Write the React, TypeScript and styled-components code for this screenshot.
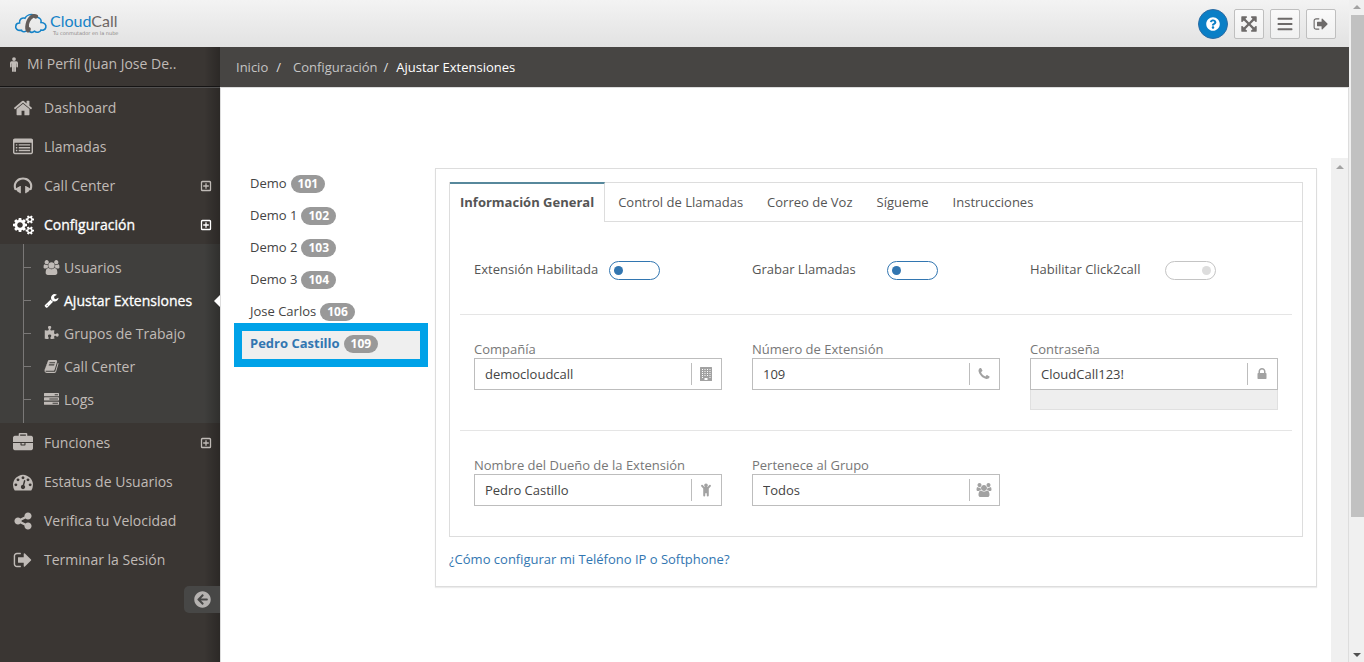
import React from 'react';
import styled, { createGlobalStyle, css } from 'styled-components';
import { FaArrowCircleLeft, FaQuestionCircle } from 'react-icons/fa';

const GlobalStyle = createGlobalStyle`
  * { box-sizing: border-box; }
  body {
    margin: 0;
    background: #fff;
    color: #555;
    font: 13px/20px 'Open Sans', 'Noto Sans', sans-serif;
  }
  a { color: inherit; text-decoration: none; }
  button, input { font: inherit; }
  ul, ol { list-style: none; margin: 0; padding: 0; }
`;

/* ---------- Icons ---------- */

const paths = {
  home: 'M1472 992v480q0 26-19 45t-45 19h-384v-384h-256v384h-384q-26 0-45-19t-19-45v-480q0-1 .5-3t.5-3l575-474 575 474q1 2 1 6zm223-69l-62 74q-8 9-21 11h-3q-13 0-21-7l-692-577-692 577q-12 8-24 7-13-2-21-11l-62-74q-8-10-7-23.5t11-21.5l719-599q32-26 76-26t76 26l244 204v-195q0-14 9-23t23-9h192q14 0 23 9t9 23v408l219 182q10 8 11 21.5t-7 23.5z',
  list: 'M256 1152h128v128h-128zM256 896h128v128h-128zM256 640h128v128h-128zM512 1152h1024v128h-1024zM512 896h1024v128h-1024zM512 640h1024v128h-1024zM1664 1376v-832q0-13-9.500-22.500t-22.500-9.500h-1472q-13 0-22.500 9.500t-9.500 22.500v832q0 13 9.500 22.500t22.500 9.500h1472q13 0 22.500-9.500t9.500-22.500zM1792 288v1088q0 66-47 113t-113 47h-1472q-66 0-113-47t-47-113v-1088q0-66 47-113t113-47h1472q66 0 113 47t47 113z',
  headphones: 'M1728 886q0 166-60 314l-20 49-185 33q-22 83-90.5 136.500t-156.500 53.500v32q0 14-9 23t-23 9h-64q-14 0-23-9t-9-23v-576q0-14 9-23t23-9h64q14 0 23 9t9 23v32q71 0 130 35.500t93 95.500l68-12q29-95 29-193 0-148-88-279t-236.500-209-315.500-78-315.500 78-236.500 209-88 279q0 98 29 193l68 12q34-60 93-95.500t130-35.500v-32q0-14 9-23t23-9h64q14 0 23 9t9 23v576q0 14-9 23t-23 9h-64q-14 0-23-9t-9-23v-32q-88 0-156.500-53.500t-90.500-136.500l-185-33-20-49q-60-148-60-314 0-151 67-291t179-242.500 266-163.500 320-61 320 61 266 163.500 179 242.500 67 291z',
  cogs: 'M896 896q0-106-75-181t-181-75-181 75-75 181 75 181 181 75 181-75 75-181zm768 512q0-52-38-90t-90-38-90 38-38 90q0 53 37.500 90.500t90.500 37.500 90.500-37.500 37.500-90.500zm0-1024q0-52-38-90t-90-38-90 38-38 90q0 53 37.500 90.500t90.500 37.500 90.500-37.500 37.500-90.500zm-384 421v185q0 10-7 19.500t-16 10.500l-155 24q-11 35-32 76 34 48 90 115 7 11 7 20 0 12-7 19-23 30-82.500 89.500t-78.500 59.500q-11 0-21-7l-115-90q-37 19-77 31-11 108-23 155-7 24-30 24h-186q-11 0-20-7.500t-10-17.500l-23-153q-34-10-75-31l-118 89q-7 7-20 7-11 0-21-8-144-133-144-160 0-9 7-19 10-14 41-53t47-61q-23-44-35-82l-152-24q-10-1-17-9.500t-7-19.500v-185q0-10 7-19.500t16-10.500l155-24q11-35 32-76-34-48-90-115-7-11-7-20 0-12 7-20 22-30 82-89t79-59q11 0 21 7l115 90q34-18 77-32 11-108 23-154 7-24 30-24h186q11 0 20 7.500t10 17.500l23 153q34 10 75 31l118-89q8-7 20-7 11 0 21 8 144 133 144 160 0 8-7 19-12 16-42 54t-45 60q23 48 34 82l152 23q10 2 17 10.500t7 19.500zm640 533v140q0 16-149 31-12 27-30 52 51 113 51 138 0 4-4 7-122 71-124 71-8 0-46-47t-52-68q-20 2-30 2t-30-2q-14 21-52 68t-46 47q-2 0-124-71-4-3-4-7 0-25 51-138-18-25-30-52-149-15-149-31v-140q0-16 149-31 13-29 30-52-51-113-51-138 0-4 4-7 4-2 35-20t59-34 30-16q8 0 46 46.500t52 67.500q20-2 30-2t30 2q51-71 92-112l6-2q4 0 124 70 4 3 4 7 0 25-51 138 17 23 30 52 149 15 149 31zm0-1024v140q0 16-149 31-12 27-30 52 51 113 51 138 0 4-4 7-122 71-124 71-8 0-46-47t-52-68q-20 2-30 2t-30-2q-14 21-52 68t-46 47q-2 0-124-71-4-3-4-7 0-25 51-138-18-25-30-52-149-15-149-31v-140q0-16 149-31 13-29 30-52-51-113-51-138 0-4 4-7 4-2 35-20t59-34 30-16q8 0 46 46.500t52 67.500q20-2 30-2t30 2q51-71 92-112l6-2q4 0 124 70 4 3 4 7 0 25-51 138 17 23 30 52 149 15 149 31z',
  group: 'M657 896q-162 5-265 128h-134q-82 0-138-40.500t-56-118.500q0-353 124-353 6 0 43.500 21t97.500 42.500 119 21.500q67 0 133-23-5 37-5 66 0 139 81 256zm1071 637q0 120-73 189.500t-194 69.500h-874q-121 0-194-69.500t-73-189.500q0-53 3.500-103.500t14-109 26.500-108.500 43-97.500 62-81 85.500-53.500 111.500-20q10 0 43 21.500t73 48 107 48 135 21.500 135-21.500 107-48 73-48 43-21.500q61 0 111.500 20t85.500 53.500 62 81 43 97.500 26.500 108.500 14 109 3.500 103.500zm-1024-1277q0 106-75 181t-181 75-181-75-75-181 75-181 181-75 181 75 75 181zm704 384q0 159-112.500 271.500t-271.500 112.500-271.500-112.500-112.500-271.500 112.500-271.500 271.500-112.500 271.500 112.500 112.500 271.500zm576 225q0 78-56 118.500t-138 40.500h-134q-103-123-265-128 81-117 81-256 0-29-5-66 66 23 133 23 59 0 119-21.500t97.500-42.500 43.500-21q124 0 124 353zm-128-609q0 106-75 181t-181 75-181-75-75-181 75-181 181-75 181 75 75 181z',
  wrench: 'M448 1472q0-26-19-45t-45-19-45 19-19 45 19 45 45 19 45-19 19-45zm644-420l-682 682q-37 37-90 37-52 0-91-37l-106-108q-38-36-38-90 0-53 38-91l681-681q39 98 114.500 173.500t173.500 114.500zm634-435q0 39-23 106-47 134-164.500 217.500t-258.500 83.500q-185 0-316.500-131.500t-131.500-316.500 131.500-316.500 316.500-131.500q58 0 121.500 16.500t107.500 46.500q16 11 16 28t-16 28l-293 169v224l193 107q5-3 79-48.500t135.500-81 70.500-35.500q15 0 23.500 10t8.500 25z',
  puzzle: 'M1755 1083q0 81-44.500 135t-123.500 54q-41 0-77.500-17.500t-59-38-56.500-38-71-17.500q-110 0-110 124 0 39 16 115t15 115v5q-22 0-33 1-34 3-97.500 11.500t-115.500 13.500-98 5q-61 0-103-26.500t-42-83.500q0-37 17.500-71t38-56.500 38-59 17.500-77.500q0-79-54-123.500t-135-44.500q-84 0-143 45.500t-59 127.500q0 43 15 83t33.500 64.500 33.500 53 15 50.500q0 45-46 89-37 35-117 35-95 0-245-24-9-2-27.500-4t-27.500-4l-13-2q-1 0-3-1-2 0-2-1v-1024q2 1 17.500 3.500t34 5 21.500 3.500q150 24 245 24 80 0 117-35 46-44 46-89 0-22-15-50.500t-33.500-53-33.500-64.500-15-83q0-82 59-127.500t144-45.500q80 0 134 44.500t54 123.500q0 41-17.500 77.500t-38 59-38 56.500-17.500 71q0 57 42 83.500t103 26.500q64 0 180-15t163-17v2q-1 2-3.500 17.500t-5 34-3.500 21.500q-24 150-24 245 0 80 35 117 44 46 89 46 22 0 50.500-15t53-33.500 64.500-33.500 83-15q82 0 127.500 59t45.500 143z',
  book: 'M1703 478q40 57 18 129l-275 906q-19 64-76.500 107.500t-122.500 43.500h-923q-77 0-148.500-53.500t-99.500-131.500q-24-67-2-127 0-4 3-27t4-37q1-8-3-21.500t-3-19.500q2-11 8-21t16.500-23.500 16.500-23.500q23-38 45-91.500t30-91.500q3-10 .5-30t-.5-28q3-11 17-28t17-23q21-36 42-92t25-90q1-9-2.500-32t.5-28q4-13 22-30.500t22-22.500q19-26 42.500-84.500t27.500-96.500q1-8-3-25.500t-2-26.500q2-8 9-18t18-23 17-21q8-12 16.500-30.500t15-35 16-36 19.500-32 26.500-23.500 36-11.500 47.500 5.500l-1 3q38-9 51-9h761q74 0 114 56t18 130l-274 906q-36 119-71.500 153.500t-128.500 34.500h-869q-27 0-38 15-11 16-1 43 24 70 144 70h923q29 0 56-15.500t35-41.500l300-987q7-22 5-57 38 15 59 43zm-1064 2q-4 13 2 22.500t20 9.500h608q13 0 25.500-9.500t16.500-22.500l21-64q4-13-2-22.500t-20-9.500h-608q-13 0-25.500 9.500t-16.500 22.500zm-83 256q-4 13 2 22.500t20 9.500h608q13 0 25.500-9.500t16.500-22.500l21-64q4-13-2-22.500t-20-9.500h-608q-13 0-25.500 9.500t-16.500 22.500z',
  tasks: 'M1024 1408h640v-128h-640v128zm-384-512h1024v-128h-1024v128zm640-512h384v-128h-384v128zm512 832v256q0 26-19 45t-45 19h-1664q-26 0-45-19t-19-45v-256q0-26 19-45t45-19h1664q26 0 45 19t19 45zm0-512v256q0 26-19 45t-45 19h-1664q-26 0-45-19t-19-45v-256q0-26 19-45t45-19h1664q26 0 45 19t19 45zm0-512v256q0 26-19 45t-45 19h-1664q-26 0-45-19t-19-45v-256q0-26 19-45t45-19h1664q26 0 45 19t19 45z',
  briefcase: 'M640 256h512v-128h-512v128zm1152 640v480q0 66-47 113t-113 47h-1472q-66 0-113-47t-47-113v-480h672v160q0 26 19 45t45 19h320q26 0 45-19t19-45v-160h672zm-768 0v128h-256v-128h256zm768-480v384h-1792v-384q0-66 47-113t113-47h352v-160q0-40 28-68t68-28h576q40 0 68 28t28 68v160h352q66 0 113 47t47 113z',
  gauge: 'M384 1152q0-53-37.500-90.500t-90.500-37.500-90.500 37.500-37.500 90.500 37.500 90.500 90.500 37.500 90.500-37.500 37.500-90.500zm192-448q0-53-37.500-90.500t-90.500-37.500-90.500 37.500-37.500 90.500 37.500 90.500 90.500 37.500 90.500-37.500 37.500-90.500zm428 481l101-382q6-26-7.500-48.500t-38.500-29.500-48 6.500-30 39.500l-101 382q-60 5-107 43.500t-63 98.500q-20 77 20 146t117 89 146-20 89-117q16-60-6-117t-72-91zm660-33q0-53-37.500-90.500t-90.500-37.500-90.500 37.500-37.500 90.500 37.500 90.500 90.500 37.500 90.500-37.500 37.500-90.500zm-640-640q0-53-37.500-90.500t-90.500-37.500-90.500 37.500-37.500 90.500 37.500 90.500 90.500 37.500 90.500-37.500 37.500-90.500zm448 192q0-53-37.500-90.500t-90.500-37.500-90.500 37.500-37.500 90.500 37.500 90.500 90.500 37.500 90.500-37.500 37.500-90.500zm320 448q0 261-141 483-19 29-54 29h-1402q-35 0-54-29-141-221-141-483 0-182 71-348t191-286 286-191 348-71 348 71 286 191 191 286 71 348z',
  share: 'M1344 1024q133 0 226.500 93.500t93.500 226.500-93.500 226.500-226.500 93.500-226.500-93.500-93.500-226.500q0-12 2-34l-360-180q-92 86-218 86-133 0-226.500-93.500t-93.500-226.500 93.500-226.500 226.500-93.500q126 0 218 86l360-180q-2-22-2-34 0-133 93.500-226.500t226.500-93.500 226.500 93.500 93.500 226.500-93.500 226.500-226.500 93.500q-126 0-218-86l-360 180q2 22 2 34t-2 34l360 180q92-86 218-86z',
  signOut: 'M704 1440q0 4 1 20t.5 26.500-3 23.500-10 19.500-20.500 6.500h-320q-119 0-203.500-84.500t-84.500-203.500v-704q0-119 84.500-203.500t203.500-84.500h320q13 0 22.500 9.500t9.500 22.500q0 4 1 20t.5 26.500-3 23.500-10 19.500-20.500 6.500h-320q-66 0-113 47t-47 113v704q0 66 47 113t113 47h312l11.500 1 11.500 3 8 5.500 7 9 2 13.500zm928-544q0 26-19 45l-544 544q-19 19-45 19t-45-19-19-45v-288h-448q-26 0-45-19t-19-45v-384q0-26 19-45t45-19h448v-288q0-26 19-45t45-19 45 19l544 544q19 19 19 45z',
  expand: 'M1411 541l-355 355 355 355 144-144q29-31 70-14 39 17 39 59v448q0 26-19 45t-45 19h-448q-42 0-59-40-17-39 14-69l144-144-355-355-355 355 144 144q31 30 14 69-17 40-59 40h-448q-26 0-45-19t-19-45v-448q0-42 40-59 39-17 69 14l144 144 355-355-355-355-144 144q-19 19-45 19-12 0-24-5-40-17-40-59v-448q0-26 19-45t45-19h448q42 0 59 40 17 39-14 69l-144 144 355 355 355-355-144-144q-31-30-14-69 17-40 59-40h448q26 0 45 19t19 45v448q0 42-39 59-13 5-25 5-26 0-45-19z',
  bars: 'M64 256q0-52 52-52h1560q52 0 52 52v108q0 52-52 52h-1560q-52 0-52-52zM64 842q0-52 52-52h1560q52 0 52 52v108q0 52-52 52h-1560q-52 0-52-52zM64 1428q0-52 52-52h1560q52 0 52 52v108q0 52-52 52h-1560q-52 0-52-52z',
  lock: 'M640 768h512v-192q0-106-75-181t-181-75-181 75-75 181v192zm832 96v576q0 40-28 68t-68 28h-960q-40 0-68-28t-28-68v-576q0-40 28-68t68-28h32v-192q0-184 132-316t316-132 316 132 132 316v192h32q40 0 68 28t28 68z',
  phone: 'M1600 1240q0 27-10 70.500t-21 68.500q-21 50-122 106-94 51-186 51-27 0-53-3.500t-57.500-12.500-47-14.500-55.500-20.500-49-18q-98-35-175-83-127-79-264-216t-216-264q-48-77-83-175-3-9-18-49t-20.500-55.500-14.500-47-12.500-57.500-3.500-53q0-92 51-186 56-101 106-122 25-11 68.500-21t70.500-10q14 0 21 3 18 6 53 76 11 19 30 54t35 63.500 31 53.500q3 4 17.500 25t21.500 35.500 7 28.500q0 20-28.500 50t-62 55-62 53-28.500 46q0 9 5 22.500t8.500 20.500 14 24 11.500 19q76 137 174 235t235 174q2 1 19 11.500t24 14 20.500 8.500 22.500 5q18 0 46-28.500t53-62 55-62 50-28.500q14 0 28.500 7t35.500 21.500 25 17.500q25 15 53.500 31t63.500 35 54 30q70 35 76 53 3 7 3 21z',
  male: 'M896 128a210 210 0 1 1 0 420a210 210 0 1 1 0-420zM640 580h512q192 0 192 192v416q0 96-96 96t-96-96v-352h-32v840q0 112-112 112t-96-112v-420h-32v420q0 112-96 112t-112-112v-840h-32v352q0 96-96 96t-96-96v-416q0-192 192-192z',
  child: 'M896 64a235 235 0 1 1 0 470a235 235 0 1 1 0-470zM300 258q90-84 180 0l216 254h400l216-254q90-84 180 0q78 86 0 180l-240 254v906q0 130-130 130t-130-130v-300h-192v300q0 130-130 130t-130-130v-906l-240-254q-78-94 0-180z',
  building: 'M128 64q0-64 64-64h1408q64 0 64 64v1664q0 64-64 64h-1408q-64 0-64-64zM384 256v128h128v-128zM704 256v128h128v-128zM1024 256v128h128v-128zM1344 256v128h128v-128zM384 512v128h128v-128zM704 512v128h128v-128zM1024 512v128h128v-128zM1344 512v128h128v-128zM384 768v128h128v-128zM704 768v128h128v-128zM1024 768v128h128v-128zM1344 768v128h128v-128zM384 1024v128h128v-128zM704 1024v128h128v-128zM1024 1024v128h128v-128zM1344 1024v128h128v-128zM384 1280v128h128v-128zM1344 1280v128h128v-128zM704 1408v256h384v-256z',
  plusBox: 'M128 352q0-224 224-224h1088q224 0 224 224v1088q0 224-224 224h-1088q-224 0-224-224zM320 400v992q0 80 80 80h992q80 0 80-80v-992q0-80-80-80h-992q-80 0-80 80zM800 480h192v320h320v192h-320v320h-192v-320h-320v-192h320z',
};

type IconName = keyof typeof paths;

const wide: Partial<Record<IconName, number>> = { cogs: 1920, group: 2048 };

const Icon = ({ name, size }: { name: IconName; size: number }) => {
  const w = wide[name] ?? 1792;
  return (
    <svg
      width={Math.round((size * w) / 1792)}
      height={size}
      viewBox={`0 0 ${w} 1792`}
      fill="currentColor"
      fillRule={name === 'building' || name === 'plusBox' || name === 'list' ? 'evenodd' : 'nonzero'}
      aria-hidden="true"
    >
      <path d={paths[name]} />
    </svg>
  );
};

/* ---------- Page frame ---------- */

const Page = styled.div`
  display: grid;
  grid-template-columns: minmax(0, 1fr) 15px;
  min-height: 100vh;
`;

const Shell = styled.div`
  display: grid;
  grid-template-columns: 220px minmax(0, 1fr);
  grid-template-rows: 47px 1fr;
`;

const TopBar = styled.header`
  grid-column: 1 / -1;
  display: flex;
  align-items: center;
  justify-content: space-between;
  padding: 0 13px 0 14px;
  background: linear-gradient(#f3f3f3, #e2e2e2);
`;

const Brand = styled.a`
  display: flex;
  align-items: center;
  gap: 2px;
`;

const BrandText = styled.span`
  display: flex;
  flex-direction: column;
`;

const BrandName = styled.span`
  font: 16px/18px Lato, sans-serif;
  color: #1583c8;
`;

const BrandTail = styled.span`
  color: #6d6663;
`;

const Tagline = styled.span`
  padding-left: 3px;
  font: 5px/6px 'DejaVu Sans', sans-serif;
  color: #8d8a88;
`;

const Tools = styled.div`
  display: flex;
  gap: 6px;
`;

const ToolButton = styled.button<{ $round?: boolean }>`
  display: grid;
  place-items: center;
  width: 30px;
  height: 30px;
  padding: 0;
  border: 1px solid #bfbfbf;
  border-radius: 2px;
  background: linear-gradient(#fafafa, #f0f0f0);
  color: #6d6a69;
  ${(p) =>
    p.$round &&
    css`
      border-color: #2b6ba3;
      border-radius: 50%;
      background: #0a7fc6;
      color: #fff;
    `}
`;

/* ---------- Sidebar ---------- */

const edgeShade = 'linear-gradient(270deg, rgba(0, 0, 0, 0.25), transparent 16px)';

const Sidebar = styled.aside`
  background: ${edgeShade}, #3a3633;
  color: #c0bbb7;
  font-size: 14px;
`;

const Profile = styled.a`
  display: flex;
  align-items: center;
  gap: 5px;
  height: 41px;
  padding: 0 0 6px 6px;
  border-bottom: 1px solid #525151;
  box-shadow: inset 0 -1px 0 #151414;
`;

const NavLink = styled.a<{ $active?: boolean }>`
  display: grid;
  grid-template-columns: 22px 1fr 12px;
  align-items: center;
  column-gap: 10px;
  height: 39px;
  padding: 0 8px 0 12px;
  color: ${(p) => (p.$active ? '#fff' : 'inherit')};
  -webkit-text-stroke: ${(p) => (p.$active ? '0.3px' : '0')};

  svg { justify-self: center; }
`;

const SubNav = styled.ul`
  position: relative;
  padding: 7px 0 7px 23px;
  background: ${edgeShade}, #403f3d;

  &::before {
    content: '';
    position: absolute;
    left: 23px;
    top: 0;
    bottom: 0;
    width: 1px;
    background: #7a7877;
  }
`;

const SubLink = styled.a<{ $active?: boolean }>`
  position: relative;
  display: flex;
  align-items: center;
  height: 33px;
  color: ${(p) => (p.$active ? '#fff' : 'inherit')};
  -webkit-text-stroke: ${(p) => (p.$active ? '0.3px' : '0')};

  &::before {
    content: '';
    width: 8px;
    height: 1px;
    margin-right: 12px;
    background: #7a7877;
  }

  ${(p) =>
    p.$active &&
    css`
      &::after {
        content: '';
        position: absolute;
        right: 0;
        top: 11px;
        border: solid transparent;
        border-width: 6px 6px 6px 0;
        border-right-color: #fff;
      }
    `}
`;

const SubIcon = styled.span`
  display: flex;
  justify-content: center;
  width: 17px;
  margin-right: 4px;
`;

const Collapse = styled.button`
  display: grid;
  place-items: center;
  width: 36px;
  height: 27px;
  margin: 7px 0 0 auto;
  padding: 0;
  border: 0;
  border-radius: 5px 0 0 5px;
  background: #474746;
  color: #b5b2b0;
`;

/* ---------- Content ---------- */

const Main = styled.main`
  display: flex;
  flex-direction: column;
`;

const Crumbs = styled.ol`
  display: flex;
  align-items: center;
  height: 40px;
  padding-left: 16px;
  background: #474543;
  color: #c4c4c4;
`;

const Crumb = styled.li<{ $current?: boolean }>`
  color: ${(p) => (p.$current ? '#fff' : 'inherit')};

  &:not(:first-child)::before {
    content: '/';
    padding: 0 ${(p) => (p.$current ? '8px 0 6px' : '12px 0 8px')};
    color: #ddd;
  }
`;

const Content = styled.div`
  flex: 1;
  display: flex;
  padding-top: 70px;
  border: solid #ddd;
  border-width: 1px 1px 0 1px;
`;

const Workspace = styled.div`
  flex: 1;
  display: grid;
  grid-template-columns: 178px minmax(0, 1fr);
  gap: 15px;
  align-items: start;
  padding: 10px 14px 24px 21px;
`;

const Extensions = styled.ul`
  display: flex;
  flex-direction: column;
  gap: 4px;
  padding-top: 3px;
`;

const Extension = styled.a<{ $active?: boolean }>`
  display: flex;
  align-items: center;
  gap: 4px;
  height: 28px;
  padding: 0 8px 4px;
  color: #444;
  ${(p) =>
    p.$active &&
    css`
      background: #efefef;
      outline: 8px solid #00a2e8;
      color: #3276b1;
      font-weight: 700;
    `}
`;

const Badge = styled.span`
  margin-top: 1px;
  padding: 0 7px;
  border-radius: 9px;
  background: #999;
  color: #fff;
  font-size: 12px;
  font-weight: 700;
  line-height: 18px;
`;

const Card = styled.section`
  padding: 13px 13px 17px;
  border: 1px solid #ddd;
  box-shadow: 0 1px 1px #ececec;
`;

const Panel = styled.div`
  border: 1px solid #ddd;
`;

const Tabs = styled.div`
  display: flex;
  height: 39px;
  border-bottom: 1px solid #ddd;
`;

const Tab = styled.button<{ $active?: boolean }>`
  height: 38px;
  padding: 0 12px;
  border: 0;
  background: #fff;
  color: #555;
  ${(p) =>
    p.$active &&
    css`
      height: 40px;
      margin: -1px 1px 0 0;
      padding: 0 10px 2px;
      border-top: 2px solid #57889c;
      border-right: 1px solid #ddd;
      font-weight: 700;
    `}
`;

const Group = styled.div<{ $last?: boolean }>`
  display: grid;
  grid-template-columns: repeat(3, minmax(0, 1fr));
  gap: 30px;
  margin: 0 10px;
  padding: 24px 14px ${(p) => (p.$last ? 30 : 20)}px;
  border-bottom: ${(p) => (p.$last ? 0 : 1)}px solid #e5e5e5;
`;

const SwitchRow = styled.label`
  display: grid;
  grid-template-columns: 135px auto;
  align-items: center;
  justify-content: start;
  height: 48px;
  padding-bottom: 2px;
`;

const Switch = styled.input`
  appearance: none;
  display: flex;
  align-items: center;
  justify-content: flex-end;
  width: 51px;
  height: 19px;
  margin: 2px 0 0;
  padding: 0 4px;
  border: 1px solid #c4c4c4;
  border-radius: 10px;

  &::before {
    content: '';
    width: 9px;
    height: 9px;
    border-radius: 50%;
    background: #ddd;
  }
  &:checked {
    border-color: #3276b1;
    justify-content: flex-start;
  }
  &:checked::before { background: #3276b1; }
`;

const FieldLabel = styled.label`
  display: block;
  height: 19px;
  color: #777;
  line-height: 21px;
`;

const InputFrame = styled.div`
  display: flex;
  align-items: center;
  height: 32px;
  border: 1px solid #bdbdbd;
`;

const TextInput = styled.input`
  flex: 1;
  min-width: 0;
  height: 30px;
  padding: 0 10px;
  border: 0;
  outline: 0;
  background: transparent;
  color: #444;
`;

const Addon = styled.span`
  display: grid;
  place-items: center;
  width: 30px;
  height: 22px;
  padding-right: 2px;
  border-left: 1px solid #bdbdbd;
  color: #a2a2a2;
`;

const Strength = styled.div`
  height: 20px;
  border: 1px solid #e0e0e0;
  border-top: 0;
  background: #eee;
`;

const HelpLink = styled.a`
  display: inline-block;
  margin-top: 12px;
  color: #3276b1;
`;

/* ---------- Scroll bars ---------- */

const Track = styled.div`
  display: flex;
  flex-direction: column;
  align-items: center;
  padding: 5px 0;
  background: #f0f0f0;
`;

const InnerTrack = styled(Track)`
  width: 17px;
  padding-top: 7px;
`;

const Arrow = styled.span<{ $down?: boolean }>`
  border: solid transparent;
  border-width: ${(p) => (p.$down ? '4px 4px 0' : '0 4px 4px')};
  border-top-color: ${(p) => (p.$down ? '#505050' : 'transparent')};
  border-bottom-color: ${(p) => (p.$down ? 'transparent' : '#a3a3a3')};
`;

const Thumb = styled.div`
  align-self: stretch;
  flex: 0 0 77%;
  margin: 6px 0 auto 2px;
  background: #c1c1c1;
`;

/* ---------- Data ---------- */

type NavItem = { icon: IconName; label: string; expandable?: boolean; active?: boolean };

const navTop: NavItem[] = [
  { icon: 'home', label: 'Dashboard' },
  { icon: 'list', label: 'Llamadas' },
  { icon: 'headphones', label: 'Call Center', expandable: true },
  { icon: 'cogs', label: 'Configuración', expandable: true, active: true },
];

const navSub: NavItem[] = [
  { icon: 'group', label: 'Usuarios' },
  { icon: 'wrench', label: 'Ajustar Extensiones', active: true },
  { icon: 'puzzle', label: 'Grupos de Trabajo' },
  { icon: 'book', label: 'Call Center' },
  { icon: 'tasks', label: 'Logs' },
];

const navBottom: NavItem[] = [
  { icon: 'briefcase', label: 'Funciones', expandable: true },
  { icon: 'gauge', label: 'Estatus de Usuarios' },
  { icon: 'share', label: 'Verifica tu Velocidad' },
  { icon: 'signOut', label: 'Terminar la Sesión' },
];

const extensions = [
  ['Demo', '101'],
  ['Demo 1', '102'],
  ['Demo 2', '103'],
  ['Demo 3', '104'],
  ['Jose Carlos', '106'],
  ['Pedro Castillo', '109'],
];

const tabs = ['Información General', 'Control de Llamadas', 'Correo de Voz', 'Sígueme', 'Instrucciones'];

const NavRow = ({ item }: { item: NavItem }) => (
  <NavLink href="#" $active={item.active}>
    <Icon name={item.icon} size={20} />
    <span>{item.label}</span>
    {item.expandable && <Icon name="plusBox" size={12} />}
  </NavLink>
);

const Field = ({ id, label, value, icon, strength }: {
  id: string;
  label: string;
  value: string;
  icon: IconName;
  strength?: boolean;
}) => (
  <div>
    <FieldLabel htmlFor={id}>{label}</FieldLabel>
    <InputFrame>
      <TextInput id={id} type="text" defaultValue={value} />
      <Addon><Icon name={icon} size={14} /></Addon>
    </InputFrame>
    {strength && <Strength />}
  </div>
);

const Logo = () => (
  <svg width="34" height="22" viewBox="0 0 34 22" fill="none" aria-hidden="true">
    <path
      d="M13 17.500C11 19.500 8 18.800 7.500 17.200C3.500 18 1 15.500 1.800 12.700C2.200 11 3.800 10 5.500 10C5 6.500 8 4.300 11 5.200C12.500 2.500 16 1 19 1.800"
      stroke="#1583c8" strokeWidth="1.600" strokeLinecap="round"
    />
    <path
      d="M23.500 4.200C26.500 5 27.500 7.500 27 9.500C30.500 9.500 32.500 12 31.800 14.500C31.300 16.600 29 17.600 27 17C26 19.500 22.500 20 20.500 18.200C19 19.500 17 19.500 15.500 18.500"
      stroke="#1583c8" strokeWidth="1.600" strokeLinecap="round"
    />
    <path
      d="M16.500 2.200C18.500 0.600 21.500 0.400 23.600 2C24.600 3 24.200 4.400 23 5.200C21.800 6 20.600 5.600 19.600 4.800C16.200 6.800 14.600 10.600 15 14C16.600 14.400 17.200 15.400 16.600 17.200C16 19.200 14.600 20 13.200 19.400C11 18 10.800 14.600 11.600 11C12.400 7.200 14 4.200 16.500 2.200Z"
      fill="#625d5b"
    />
  </svg>
);

export default function App() {
  return (
    <>
      <GlobalStyle />
      <Page>
        <Shell>
          <TopBar>
            <Brand href="#">
              <Logo />
              <BrandText>
                <BrandName>Cloud<BrandTail>Call</BrandTail></BrandName>
                <Tagline>Tu conmutador en la nube</Tagline>
              </BrandText>
            </Brand>
            <Tools>
              <ToolButton $round aria-label="Ayuda"><FaQuestionCircle size={14} /></ToolButton>
              <ToolButton aria-label="Pantalla completa"><Icon name="expand" size={18} /></ToolButton>
              <ToolButton aria-label="Menú"><Icon name="bars" size={16} /></ToolButton>
              <ToolButton aria-label="Salir"><Icon name="signOut" size={16} /></ToolButton>
            </Tools>
          </TopBar>

          <Sidebar>
            <Profile href="#">
              <Icon name="male" size={16} />
              <span>Mi Perfil (Juan Jose De..</span>
            </Profile>
            <nav>
              {navTop.map((item) => <NavRow key={item.label} item={item} />)}
              <SubNav>
                {navSub.map((item) => (
                  <li key={item.label}>
                    <SubLink href="#" $active={item.active}>
                      <SubIcon><Icon name={item.icon} size={15} /></SubIcon>
                      {item.label}
                    </SubLink>
                  </li>
                ))}
              </SubNav>
              {navBottom.map((item) => <NavRow key={item.label} item={item} />)}
            </nav>
            <Collapse aria-label="Contraer menú"><FaArrowCircleLeft size={17} /></Collapse>
          </Sidebar>

          <Main>
            <Crumbs>
              <Crumb><a href="#">Inicio</a></Crumb>
              <Crumb><a href="#">Configuración</a></Crumb>
              <Crumb $current>Ajustar Extensiones</Crumb>
            </Crumbs>
            <Content>
              <Workspace>
                <Extensions>
                  {extensions.map(([name, number]) => (
                    <li key={number}>
                      <Extension href="#" $active={number === '109'}>
                        {name}<Badge>{number}</Badge>
                      </Extension>
                    </li>
                  ))}
                </Extensions>
                <Card>
                  <Panel>
                    <Tabs role="tablist">
                      {tabs.map((tab, i) => (
                        <Tab key={tab} role="tab" aria-selected={i === 0} $active={i === 0}>{tab}</Tab>
                      ))}
                    </Tabs>
                    <Group>
                      <SwitchRow>Extensión Habilitada<Switch type="checkbox" defaultChecked /></SwitchRow>
                      <SwitchRow>Grabar Llamadas<Switch type="checkbox" defaultChecked /></SwitchRow>
                      <SwitchRow>Habilitar Click2call<Switch type="checkbox" /></SwitchRow>
                    </Group>
                    <Group>
                      <Field id="company" label="Compañía" value="democloudcall" icon="building" />
                      <Field id="number" label="Número de Extensión" value="109" icon="phone" />
                      <Field id="password" label="Contraseña" value="CloudCall123!" icon="lock" strength />
                    </Group>
                    <Group $last>
                      <Field id="owner" label="Nombre del Dueño de la Extensión" value="Pedro Castillo" icon="child" />
                      <Field id="group" label="Pertenece al Grupo" value="Todos" icon="group" />
                    </Group>
                  </Panel>
                  <HelpLink href="#">¿Cómo configurar mi Teléfono IP o Softphone?</HelpLink>
                </Card>
              </Workspace>
              <InnerTrack><Arrow /></InnerTrack>
            </Content>
          </Main>
        </Shell>
        <Track>
          <Arrow />
          <Thumb />
          <Arrow $down />
        </Track>
      </Page>
    </>
  );
}
